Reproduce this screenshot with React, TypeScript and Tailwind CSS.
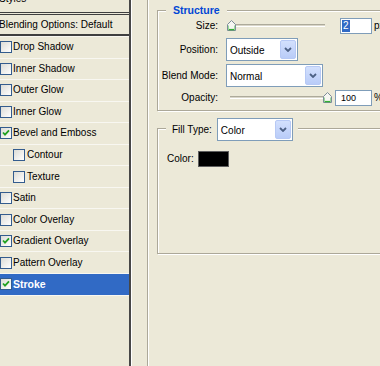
import React from "react";

type Item = { label: string; checked?: boolean; indent?: boolean; selected?: boolean };

const items: Item[] = [
  { label: "Drop Shadow" },
  { label: "Inner Shadow" },
  { label: "Outer Glow" },
  { label: "Inner Glow" },
  { label: "Bevel and Emboss", checked: true },
  { label: "Contour", indent: true },
  { label: "Texture", indent: true },
  { label: "Satin" },
  { label: "Color Overlay" },
  { label: "Gradient Overlay", checked: true },
  { label: "Pattern Overlay" },
  { label: "Stroke", checked: true, selected: true },
];

function CheckBox({ checked }: { checked?: boolean }) {
  return (
    <span className="flex h-[12px] w-[12px] shrink-0 items-center justify-center border border-[#335C8E] bg-linear-to-br from-[#DCDCD6] to-white">
      {checked ? (
        <svg width="8" height="8" viewBox="0 0 8 8">
          <path d="M1 3.5 L3 5.6 L7 1.4" fill="none" stroke="#21A121" strokeWidth="1.8" />
        </svg>
      ) : null}
    </span>
  );
}

function Thumb() {
  return (
    <svg width="9" height="11" viewBox="0 0 9 11">
      <path d="M4.5 0.5 L8.5 4.5 L8.5 10.5 L0.5 10.5 L0.5 4.5 Z" fill="#F6F6F2" stroke="#7C8C98" />
      <path d="M1.5 9.6 H7.5" stroke="#35B035" strokeWidth="1.4" />
      <path d="M1.5 5.5 V9 M7.5 5.5 V9" stroke="#9ADB9A" strokeWidth="1" />
    </svg>
  );
}

function Slider({ atMax }: { atMax?: boolean }) {
  return (
    <div className="relative ml-[8px] flex h-[17px] w-[103px] shrink-0 items-center px-[4px]">
      <div className="h-[3px] w-full border-t border-b border-t-[#ADAA9B] border-b-white bg-[#D9D6C9]" />
      <div className={atMax ? "absolute left-[97px] top-[3px] flex" : "absolute left-[1px] top-[3px] flex"}>
        <Thumb />
      </div>
    </div>
  );
}

function Chevron() {
  return (
    <svg width="8" height="5" viewBox="0 0 8 5">
      <path d="M1 1 L4 4 L7 1" fill="none" stroke="#4D6185" strokeWidth="1.8" />
    </svg>
  );
}

function Select({ value, className }: { value: string; className: string }) {
  return (
    <div className={"flex h-[23px] shrink-0 items-stretch border border-[#7F9DB9] bg-white p-[1px] " + className}>
      <span className="flex flex-1 items-center pl-[2px] pt-[2px]">{value}</span>
      <span className="flex w-[16px] items-center justify-center rounded-[2px] border border-[#B7C9F5] bg-linear-to-b from-[#D3E0FD] to-[#B9CCF8]">
        <Chevron />
      </span>
    </div>
  );
}

export default function App() {
  return (
    <div className="flex h-[366px] w-[380px] overflow-hidden bg-[#ECE9D8] font-['Liberation_Sans',Arial,sans-serif] text-[10px] leading-[12px] text-black">
      {/* Left list */}
      <div className="flex w-[129px] shrink-0 flex-col">
        <div className="flex h-[12px] shrink-0 flex-col justify-end overflow-hidden">
          <span className="-ml-[1px] mb-[7px] leading-[12px]">Styles</span>
        </div>
        <div className="h-[1px] shrink-0 bg-[#3F3F3F]" />
        <div className="h-[1px] shrink-0" />
        <div className="h-[1px] shrink-0 bg-[#3F3F3F]" />
        <div className="flex h-[19px] shrink-0 items-center -ml-[1px]">Blending Options: Default</div>
        <div className="h-[2px] shrink-0 bg-[#3F3F3F]" />
        {items.map((it) => (
          <div
            key={it.label}
            className={
              "flex h-[21.55px] shrink-0 items-center border-t border-[#F8F7F1] " +
              (it.indent ? "gap-[2px] pl-[13px] " : "gap-[1px] ") +
              (it.selected ? "bg-[#316AC5] text-[10.5px] font-bold text-white" : "")
            }
          >
            <CheckBox checked={it.checked} />
            <span>{it.label}</span>
          </div>
        ))}
        <div className="h-[1px] shrink-0 bg-[#F8F7F1]" />
      </div>
      <div className="w-[2px] shrink-0 bg-[#474747]" />
      <div className="w-[1px] shrink-0 bg-white" />
      <div className="w-[15px] shrink-0" />
      <div className="w-[1px] shrink-0 bg-[#ACA899]" />
      <div className="w-[1px] shrink-0 bg-white" />

      {/* Right side */}
      <div className="flex w-[250px] shrink-0 flex-col pl-[8px] pt-[10px]">
        {/* Structure group */}
        <div className="w-[240px] shrink-0 border border-[#ACA899] pb-[4px] shadow-[inset_1px_1px_0_#fff,1px_1px_0_#fff]">
          <div className="-mt-[7px] ml-[8px] w-fit bg-[#ECE9D8] px-[7px] text-[10.5px] font-bold leading-[13px] text-[#0046D5]">
            Structure
          </div>
          <div className="flex h-[17px] items-center">
            <span className="w-[60px] shrink-0 text-right">Size:</span>
            <Slider />
            <div className="ml-[11px] flex h-[16px] w-[32px] shrink-0 items-center border border-[#7F9DB9] bg-white pl-[1px]">
              <span className="bg-[#316AC5] px-[1px] text-[10px] leading-[12px] text-white">2</span>
            </div>
            <span className="ml-[2px]">px</span>
          </div>
          <div className="mt-[4px] flex h-[23px] items-center">
            <span className="w-[60px] shrink-0 text-right">Position:</span>
            <Select value="Outside" className="ml-[8px] w-[72px]" />
          </div>
          <div className="mt-[3px] flex h-[23px] items-center">
            <span className="w-[60px] shrink-0 text-right">Blend Mode:</span>
            <Select value="Normal" className="ml-[8px] w-[97px]" />
          </div>
          <div className="mt-[2px] flex h-[17px] items-center">
            <span className="w-[60px] shrink-0 text-right">Opacity:</span>
            <Slider atMax />
            <div className="ml-[6px] flex h-[16px] w-[37px] shrink-0 items-center border border-[#7F9DB9] bg-white pl-[5px] text-[9px]">
              100
            </div>
            <span className="ml-[2px]">%</span>
          </div>
        </div>

        {/* Fill Type group */}
        <div className="mt-[17px] w-[240px] shrink-0 border border-[#ACA899] pb-[86px] shadow-[inset_1px_1px_0_#fff,1px_1px_0_#fff]">
          <div className="-mt-[11px] ml-[8px] flex w-fit items-center bg-[#ECE9D8] pl-[6px] pr-[5px]">
            <span>Fill Type:</span>
            <Select value="Color" className="ml-[5px] w-[76px]" />
          </div>
          <div className="mt-[10px] flex h-[16px] items-center pl-[9px]">
            <span>Color:</span>
            <div className="ml-[4px] h-[16px] w-[31px] border border-[#5E5E5E] bg-black" />
          </div>
        </div>
      </div>
    </div>
  );
}
